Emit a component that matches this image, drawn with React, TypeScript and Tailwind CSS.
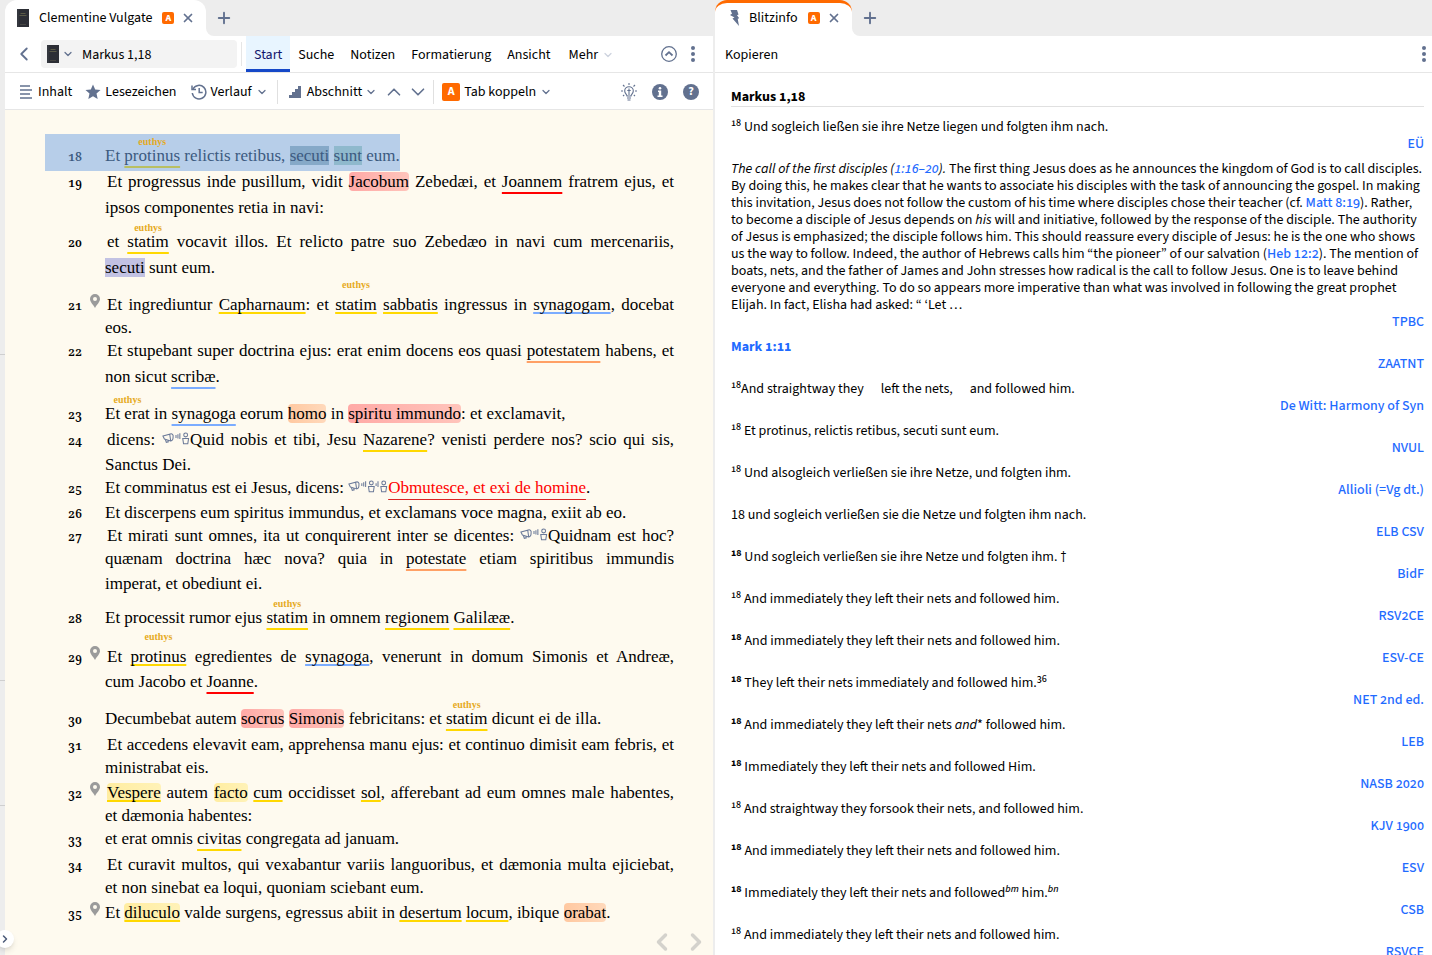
import type { ReactNode } from "react";
import { ChevronDown, ChevronLeft, ChevronRight, ChevronUp, Plus, X } from "lucide-react";

const underlines = {
    gold: "decoration-[#ffd800]",
    blue: "decoration-[#7bacff]",
    red: "decoration-[#ff0000]",
    orange: "decoration-[#ffa065]",
    olive: "decoration-[#b9bf62]",
};

const markers = {
    red: "rounded-sm bg-linear-to-r from-[#ffa9a6] to-[#ffc4bb]",
    orange: "rounded-sm bg-linear-to-r from-[#ffc8a0] to-[#ffd9bb]",
    yellow: "rounded-sm bg-linear-to-r from-[#ffeda0] to-[#fff2b8]",
    lilac: "bg-[#c2c2e3]",
    steel: "bg-[#86a9c8]",
    teal: "bg-[#8fb9cd]",
};

const heights = {
    sm: "h-[23px]",
    md: "h-[25px]",
    lg: "h-[26px]",
    xl: "h-[34px]",
    gap: "h-[37px]",
    note: "h-[39px]",
};

type UProps = { c?: keyof typeof underlines; near?: boolean; note?: boolean; mark?: keyof typeof markers; children: ReactNode };

function U({ c, near, note, mark, children }: UProps) {
    const line = c
        ? `underline decoration-2 [text-decoration-skip-ink:none] ${underlines[c]} ${near ? "underline-offset-2" : "underline-offset-[5px]"}`
        : "";
    return (
        <span className={`relative ${line} ${mark ? markers[mark] : ""}`}>
            {note && (
                <span className={`absolute left-1/2 -translate-x-1/2 text-[10px] leading-[10px] font-bold text-[#e6aa1e] ${near ? "-top-[15px]" : "-top-[9px]"}`}>
                    euthys
                </span>
            )}
            {children}
        </span>
    );
}

function Speech({ listeners = 1 }: { listeners?: number }) {
    return (
        <svg className="inline align-baseline" width={listeners === 2 ? 40 : 28} height="13" viewBox={listeners === 2 ? "0 0 42 13" : "0 0 29 13"} fill="none" stroke="#6b7a99" strokeWidth="1.1">
            <path d="M1 4 L8 2 L9 9 L2.500 7 Z M8 2 C10.500 1 12 2.500 11.500 5 C11.500 8 10.500 9 9 9 M3.500 7.500 L4.500 10.500 L6.500 10 L6 8.500" />
            <path d="M14.500 3v3M16.500 2v4.500M18.500 1v6" />
            <circle cx="24.500" cy="2.800" r="2" />
            <path d="M21.500 6.500h6l-.8 5.500h-4.400z" />
            {listeners === 2 && (
                <>
                    <path d="M29.500 3v3M31.500 1v6" />
                    <circle cx="37.500" cy="2.800" r="2" />
                    <path d="M34.500 6.500h6l-.8 5.500h-4.400z" />
                </>
            )}
        </svg>
    );
}

function Pin() {
    return (
        <svg width="10" height="14" viewBox="0 0 10 14">
            <path fill="#9b9b9b" fillRule="evenodd" d="M5 0a5 5 0 0 1 5 5c0 3-2.800 5-5 9C2.800 10 0 8 0 5a5 5 0 0 1 5-5zm0 3a2 2 0 1 0 0 4 2 2 0 0 0 0-4z" />
        </svg>
    );
}

type Line = { n?: number; h: keyof typeof heights; full?: boolean; pin?: boolean; on?: boolean; text: ReactNode };

const lines: Line[] = [
    { n: 18, h: "gap", on: true, text: <>Et <U c="olive" note>protinus</U> relictis retibus, <U mark="steel">secuti</U> <U mark="teal">sunt</U> eum.</> },
    { n: 19, h: "lg", full: true, text: <>Et progressus inde pusillum, vidit <U mark="red">Jacobum</U> Zebedæi, et <U c="red">Joannem</U> fratrem ejus, et</> },
    { h: "lg", text: "ipsos componentes retia in navi:" },
    { n: 20, h: "xl", full: true, text: <>et <U c="gold" note>statim</U> vocavit illos. Et relicto patre suo Zebedæo in navi cum mercenariis,</> },
    { h: "lg", text: <><U mark="lilac">secuti</U> sunt eum.</> },
    { n: 21, h: "gap", full: true, pin: true, text: <>Et ingrediuntur <U c="gold" near>Capharnaum</U>: et <U c="gold" near note>statim</U> <U c="gold" near>sabbatis</U> ingressus in <U c="blue" near>synagogam</U>, docebat</> },
    { h: "sm", text: "eos." },
    { n: 22, h: "sm", full: true, text: <>Et stupebant super doctrina ejus: erat enim docens eos quasi <U c="orange">potestatem</U> habens, et</> },
    { h: "lg", text: <>non sicut <U c="blue">scribæ</U>.</> },
    { n: 23, h: "gap", text: <><U note>Et erat</U> in <U c="blue">synagoga</U> eorum <U mark="orange">homo</U> in <U mark="red">spiritu immundo</U>: et exclamavit,</> },
    { n: 24, h: "lg", full: true, text: <>dicens: <Speech />Quid nobis et tibi, Jesu <U c="gold">Nazarene</U>? venisti perdere nos? scio qui sis,</> },
    { h: "md", text: "Sanctus Dei." },
    { n: 25, h: "sm", text: <>Et comminatus est ei Jesus, dicens: <Speech listeners={2} /><span className="text-[#ff0000] underline decoration-[#d92525] decoration-1 underline-offset-[6px] [text-decoration-skip-ink:none]">Obmutesce, et exi de homine</span>.</> },
    { n: 26, h: "md", text: "Et discerpens eum spiritus immundus, et exclamans voce magna, exiit ab eo." },
    { n: 27, h: "sm", full: true, text: <>Et mirati sunt omnes, ita ut conquirerent inter se dicentes: <Speech />Quidnam est hoc?</> },
    { h: "sm", full: true, text: <>quænam doctrina hæc nova? quia in <U c="orange">potestate</U> etiam spiritibus immundis</> },
    { h: "md", text: "imperat, et obediunt ei." },
    { n: 28, h: "xl", text: <>Et processit rumor ejus <U c="gold" note>statim</U> in omnem <U c="gold">regionem</U> <U c="gold">Galilææ</U>.</> },
    { n: 29, h: "note", full: true, pin: true, text: <>Et <U c="gold" near note>protinus</U> egredientes de <U c="blue" near>synagoga</U>, venerunt in domum Simonis et Andreæ,</> },
    { h: "md", text: <>cum Jacobo et <U c="red">Joanne</U>.</> },
    { n: 30, h: "gap", text: <>Decumbebat autem <U mark="red">socrus</U> <U mark="red">Simonis</U> febricitans: et <U c="gold" note>statim</U> dicunt ei de illa.</> },
    { n: 31, h: "lg", full: true, text: "Et accedens elevavit eam, apprehensa manu ejus: et continuo dimisit eam febris, et" },
    { h: "sm", text: "ministrabat eis." },
    { n: 32, h: "md", full: true, pin: true, text: <><U c="gold" near mark="yellow">Vespere</U> autem <U mark="yellow">facto</U> <U c="gold" near>cum</U> occidisset <U c="gold" near>sol</U>, afferebant ad eum omnes male habentes,</> },
    { h: "sm", text: "et dæmonia habentes:" },
    { n: 33, h: "sm", text: <>et erat omnis <U c="gold">civitas</U> congregata ad januam.</> },
    { n: 34, h: "lg", full: true, text: "Et curavit multos, qui vexabantur variis languoribus, et dæmonia multa ejiciebat," },
    { h: "sm", text: "et non sinebat ea loqui, quoniam sciebant eum." },
    { n: 35, h: "md", pin: true, text: <>Et <U c="gold" near mark="yellow">diluculo</U> valde surgens, egressus abiit in <U c="gold" near>desertum</U> <U c="gold" near>locum</U>, ibique <U mark="orange">orabat</U>.</> },
];

function Verse({ n, bold }: { n: ReactNode; bold?: boolean }) {
    return <sup className={bold ? "text-[10px] font-bold" : "text-[10px] font-medium"}>{n}</sup>;
}

function Ref({ children }: { children: ReactNode }) {
    return <a href="#ref" className="font-medium text-[#1f6bff]">{children}</a>;
}

const nets = "And immediately they left their nets and followed him.";

const entries: { label: string; text: ReactNode }[] = [
    { label: "EÜ", text: <><Verse n="18" /> Und sogleich ließen sie ihre Netze liegen und folgten ihm nach.</> },
    {
        label: "TPBC",
        text: (
            <>
                <i>The call of the first disciples (<Ref>1:16–20</Ref>).</i> The first thing Jesus does as he announces the kingdom of God is to call disciples. By doing this, he makes clear that he wants to associate his disciples with the task of announcing the gospel. In making this invitation, Jesus does not follow the custom of his time where disciples chose their teacher (cf. <Ref>Matt 8:19</Ref>). Rather, to become a disciple of Jesus depends on <i>his</i> will and initiative, followed by the response of the disciple. The authority of Jesus is emphasized; the disciple follows him. This should reassure every disciple of Jesus: he is the one who shows us the way to follow. Indeed, the author of Hebrews calls him “the pioneer” of our salvation (<Ref>Heb 12:2</Ref>). The mention of boats, nets, and the father of James and John stresses how radical is the call to follow Jesus. One is to leave behind everyone and everything. To do so appears more imperative than what was involved in following the great prophet Elijah. In fact, Elisha had asked: “ ‘Let …
            </>
        ),
    },
    { label: "ZAATNT", text: <a href="#mark-1-11" className="font-bold text-[#1f6bff]">Mark 1:11</a> },
    { label: "De Witt: Harmony of Syn", text: <><Verse n="18" />And straightway they <span className="ml-3.5">left the nets,</span> <span className="ml-3.5">and followed him.</span></> },
    { label: "NVUL", text: <><Verse n="18" /> Et protinus, relictis retibus, secuti sunt eum.</> },
    { label: "Allioli (=Vg dt.)", text: <><Verse n="18" /> Und alsogleich verließen sie ihre Netze, und folgten ihm.</> },
    { label: "ELB CSV", text: <span className="lining-nums">18 und sogleich verließen sie die Netze und folgten ihm nach.</span> },
    { label: "BidF", text: <><Verse n="18" bold /> Und sogleich verließen sie ihre Netze und folgten ihm. †</> },
    { label: "RSV2CE", text: <><Verse n="18" /> {nets}</> },
    { label: "ESV-CE", text: <><Verse n="18" bold /> {nets}</> },
    { label: "NET 2nd ed.", text: <><Verse n="18" bold /> They left their nets immediately and followed him.<Verse n="36" /></> },
    { label: "LEB", text: <><Verse n="18" bold /> And immediately they left their nets <i>and</i>* followed him.</> },
    { label: "NASB 2020", text: <><Verse n="18" bold /> Immediately they left their nets and followed Him.</> },
    { label: "KJV 1900", text: <><Verse n="18" /> And straightway they forsook their nets, and followed him.</> },
    { label: "ESV", text: <><Verse n="18" bold /> {nets}</> },
    { label: "CSB", text: <><Verse n="18" bold /> Immediately they left their nets and followed<Verse n={<i>bm</i>} /> him.<Verse n={<i>bn</i>} /></> },
    { label: "RSVCE", text: <><Verse n="18" /> {nets}</> },
];

function Book() {
    return (
        <svg width="12" height="18" viewBox="0 0 12 18">
            <rect width="12" height="18" fill="#2c2e35" />
            <path d="M1 0v18" stroke="#3d4048" />
            <path d="M3.500 4.500h5M2.500 6.500h7" stroke="#66664c" strokeWidth=".8" />
            <path d="M3 15.500h6" stroke="#4c4d48" strokeWidth=".8" />
        </svg>
    );
}

function Dots() {
    return (
        <svg width="4" height="16" viewBox="0 0 4 16" fill="#62718f">
            <circle cx="2" cy="2" r="2" />
            <circle cx="2" cy="8" r="2" />
            <circle cx="2" cy="14" r="2" />
        </svg>
    );
}

function Tab({ icon, title, accent }: { icon: ReactNode; title: string; accent?: boolean }) {
    return (
        <div className="flex h-9 shrink-0 bg-white">
            <div className="bg-[#ededed]">
                <div className={`flex h-9 items-center rounded-t-xl bg-white pr-3 pl-3 ${accent ? "overflow-hidden border-t-3 border-[#ff6a00] pb-[3px]" : ""}`}>
                    <span className="flex w-[22px]">{icon}</span>
                    <span>{title}</span>
                    <span className="mr-2 ml-[10px] flex size-3 items-center justify-center rounded-xs bg-[#ff6a00] text-[10px] leading-3 font-bold text-white">A</span>
                    <button aria-label="Tab schließen" className="flex size-3 items-center justify-center text-[#62718f]">
                        <X size={14} strokeWidth={3} className="shrink-0" />
                    </button>
                </div>
            </div>
        </div>
    );
}

function TabRest() {
    return (
        <div className="flex flex-1 items-center rounded-bl-lg bg-[#ededed] pl-[9px]">
            <button aria-label="Neuer Tab" className="text-[#62718f]"><Plus size={18} strokeWidth={2.5} /></button>
        </div>
    );
}

function Caret({ className = "text-[#62718f]" }: { className?: string }) {
    return <ChevronDown size={12} strokeWidth={2.5} className={className} />;
}

export default function App() {
    return (
        <div className="relative flex h-screen overflow-hidden bg-[#ededed] font-['Source_Sans_3','Source_Sans_Pro','Noto_Sans_CJK_SC',sans-serif] text-sm text-black">
            <div className="flex w-[5px] shrink-0 flex-col pt-[354px]">
                <div className="h-[326px] border-t border-[#cfcfcf]" />
                <div className="h-[125px] border-t border-[#cfcfcf]" />
                <div className="border-t border-[#cfcfcf]" />
            </div>

            <section className="flex min-w-0 flex-[708_1_0] flex-col overflow-hidden bg-[#fefaef]">
                <div className="flex bg-white">
                    <Tab icon={<Book />} title="Clementine Vulgate" />
                    <TabRest />
                </div>
                <nav className="flex h-[37px] shrink-0 items-center border-b border-[#e6e6e6] bg-white pr-[18px] pl-2">
                    <button aria-label="Zurück" className="w-7 text-[#62718f]"><ChevronLeft size={22} strokeWidth={2} /></button>
                    <div className="flex h-7 w-[196px] items-center rounded-sm bg-[#f3f3f3] pl-1.5">
                        <Book />
                        <span className="ml-[3px]"><Caret /></span>
                        <input aria-label="Stelle" defaultValue="Markus 1,18" className="ml-2 w-36 bg-transparent pt-px outline-none" />
                    </div>
                    <div className="mx-1 h-6 w-px bg-[#e6e6e6]" />
                    <button className="h-full border-b-3 border-[#1548c8] bg-[#e8f5ff] px-2 pt-1 text-[#10146b]">Start</button>
                    <button className="px-2 pt-px">Suche</button>
                    <button className="px-2 pt-px">Notizen</button>
                    <button className="px-2 pt-px">Formatierung</button>
                    <button className="px-2 pt-px">Ansicht</button>
                    <button className="flex items-center gap-1 px-[10px] pt-px">Mehr <Caret className="text-[#cdd3de]" /></button>
                    <button aria-label="Einklappen" className="mr-3.5 ml-auto">
                        <svg width="16" height="16" viewBox="0 0 16 16" fill="none" stroke="#62718f" strokeWidth="1.3">
                            <circle cx="8" cy="8" r="7.300" />
                            <path d="M4.500 9.500 8 6.200l3.500 3.300" strokeWidth="1.800" />
                        </svg>
                    </button>
                    <button aria-label="Menü"><Dots /></button>
                </nav>
                <div className="flex h-[37px] shrink-0 items-center border-b border-[#e6e6e6] bg-white pt-px pr-[14px] pl-[15px]">
                    <button className="flex items-center gap-1.5">
                        <svg width="12" height="14" viewBox="0 0 12 14" stroke="#62718f" strokeWidth="1.500">
                            <path d="M0 1h10M0 5h12M0 9h10M0 13h12" />
                        </svg>
                        Inhalt
                    </button>
                    <button className="ml-[13px] flex items-center gap-1">
                        <svg width="16" height="16" viewBox="0 0 16 16" fill="#62718f">
                            <path d="m8 .5 2.200 5 5.300.5-4 3.600 1.200 5.400L8 12.200 3.300 15l1.200-5.400-4-3.600 5.300-.5z" />
                        </svg>
                        Lesezeichen
                    </button>
                    <button className="ml-[14px] flex items-center gap-1">
                        <svg width="16" height="16" viewBox="0 0 16 16" fill="none" stroke="#62718f" strokeWidth="1.500">
                            <path d="M2 5a6.800 6.800 0 1 1-.7 4" />
                            <path d="M1 1.500v4h4M8.200 4v4.500h3.500" />
                        </svg>
                        Verlauf
                        <Caret />
                    </button>
                    <div className="mr-[11px] ml-[9px] h-6 w-px bg-[#e0e0e0]" />
                    <button className="flex items-center gap-1.5">
                        <svg width="12" height="12" viewBox="0 0 12 12" fill="#62718f">
                            <path d="M0 12V9h3V6h3V3h3V0h3v12z" />
                        </svg>
                        Abschnitt
                        <span className="-ml-[3px]"><Caret /></span>
                    </button>
                    <button aria-label="Zurück" className="ml-1.5 text-[#62718f]"><ChevronUp size={22} strokeWidth={1.8} /></button>
                    <button aria-label="Weiter" className="ml-0.5 text-[#62718f]"><ChevronDown size={22} strokeWidth={1.8} /></button>
                    <div className="mr-2 ml-1 h-6 w-px bg-[#e0e0e0]" />
                    <button className="flex items-center gap-1">
                        <span className="flex size-[18px] items-center justify-center rounded-xs bg-[#ff6a00] text-xs font-bold text-white">A</span>
                        Tab koppeln
                        <Caret />
                    </button>
                    <div className="ml-auto flex gap-[15px]">
                        <button aria-label="Tipp">
                            <svg width="16" height="18" viewBox="0 0 16 18" fill="none" stroke="#62718f" strokeWidth="1.100">
                                <path d="M6 13c0-1.500-2.300-2.500-2.300-5a4.300 4.300 0 0 1 8.600 0c0 2.500-2.300 3.500-2.300 5zM6 15h4M6.500 17h3M8 5.500V12M6.300 7.500h3.400" />
                                <path d="M8 0v2M2 2l1.500 1.500M14 2l-1.500 1.500M0 8h2M14 8h2M2 13l1.200-1M14 13l-1.200-1" />
                            </svg>
                        </button>
                        <button aria-label="Info" className="flex size-4 items-center justify-center self-center rounded-full bg-[#62718f]">
                            <svg width="6" height="10" viewBox="0 0 6 10" fill="#fff"><circle cx="3" cy="1.300" r="1.300" /><path d="M1 3.500h3.200V8.500H5.500V10h-5V8.500h1.300V5H1z" /></svg>
                        </button>
                        <button aria-label="Hilfe" className="flex size-4 items-center justify-center self-center rounded-full bg-[#62718f] text-xs leading-4 font-bold text-white">?</button>
                    </div>
                </div>

                <main className="pt-6 pr-[39px] pl-10 font-['Liberation_Serif',serif] text-[17px] leading-[22px]">
                    {lines.map((line, i) => (
                        <div key={i} className={`flex items-end pb-1 ${heights[line.h]} ${line.on ? "w-fit bg-[#b7cee9] text-[#3c5a80]" : ""}`}>
                            <span className="w-[37px] shrink-0 text-right font-['Noto_Serif','Liberation_Serif',serif] text-xs leading-5 font-semibold oldstyle-nums">{line.n}</span>
                            <span className="flex w-[23px] shrink-0 self-end pb-2 pl-2">{line.pin && <Pin />}</span>
                            <p className={`whitespace-nowrap ${line.full ? "min-w-0 flex-1 [text-align-last:justify]" : ""} ${line.full && line.n ? "pl-0.5" : ""}`}>{line.text}</p>
                        </div>
                    ))}
                </main>
                <div className="flex justify-end gap-1.5 pr-[3px] text-[#d4d2cc]">
                    <button aria-label="Vorherige Seite"><ChevronLeft size={28} strokeWidth={3} /></button>
                    <button aria-label="Nächste Seite"><ChevronRight size={28} strokeWidth={3} /></button>
                </div>
            </section>

            <section className="ml-0.5 flex min-w-0 flex-[717_1_0] flex-col overflow-hidden bg-white">
                <div className="flex bg-white">
                    <Tab
                        accent
                        title="Blitzinfo"
                        icon={
                            <svg width="12" height="16" viewBox="0 0 12 16" fill="#62718f" className="ml-0.5">
                                <path d="M1.500 0h6.500l1.500 4.500-1.500.7 2.200 3-1.500.6L10 16 3.500 8.500l2-1L1 5l2-1.200z" />
                            </svg>
                        }
                    />
                    <TabRest />
                </div>
                <nav className="flex h-[37px] shrink-0 items-center justify-between border-b border-[#e6e6e6] pr-1.5 pl-[10px]">
                    <button className="pt-px">Kopieren</button>
                    <button aria-label="Menü"><Dots /></button>
                </nav>
                <div className="pt-4 pr-2 pl-4 leading-[17px] oldstyle-nums">
                    <h1 className="mb-3 border-b border-[#e0e0e0] font-bold">Markus 1,18</h1>
                    {entries.map((e) => (
                        <div key={e.label} className="mb-2">
                            <p>{e.text}</p>
                            <p className="text-right"><a href="#source" className="font-medium text-[#1f6bff]">{e.label}</a></p>
                        </div>
                    ))}
                </div>
            </section>

            <button aria-label="Seitenleiste öffnen" className="absolute bottom-[7px] -left-1 flex size-[18px] items-center justify-center rounded-full bg-white text-[#4b5a78] shadow-md">
                <ChevronRight size={12} strokeWidth={3} />
            </button>
        </div>
    );
}
